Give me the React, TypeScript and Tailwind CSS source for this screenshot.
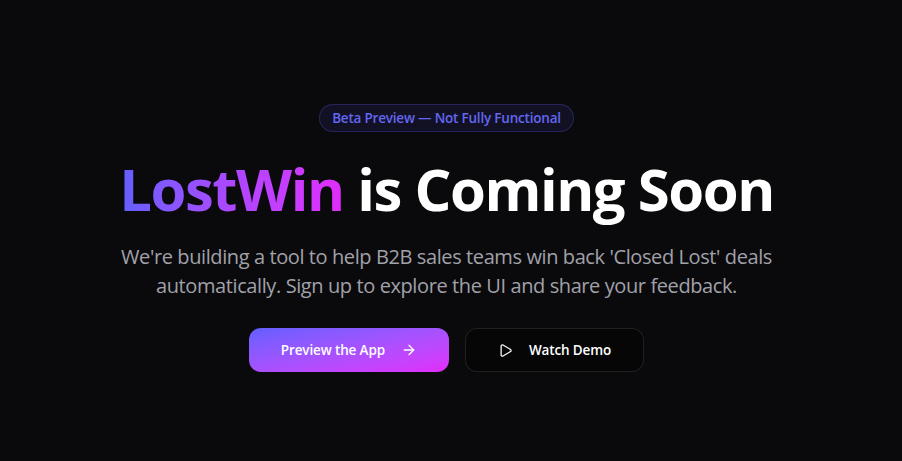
import React from 'react';
import { ArrowRight, Play } from 'lucide-react';

export default function App() {
  return (
    <div className="min-h-screen w-full bg-[#0a0a0c] font-['Open_Sans',sans-serif] text-white">
      <section className="flex flex-col items-center pl-6 pr-[33px] pt-[104px] text-center">
        <span className="rounded-full border border-indigo-500/25 bg-indigo-500/10 px-3 py-[3px] text-[13.5px] font-semibold leading-5 tracking-[-0.015em] text-[#6366f1]">
          Beta Preview — Not Fully Functional
        </span>

        <h1 className="mt-[21px] text-[58px] font-bold leading-[72px] tracking-[-0.025em]">
          <span className="bg-gradient-to-r from-indigo-500 via-purple-500 to-fuchsia-500 bg-clip-text text-transparent">
            LostWin
          </span>{' '}
          is Coming Soon
        </h1>

        <p className="mt-[17px] text-xl leading-[29px] tracking-[-0.02em] text-[#a1a1aa]">
          We're building a tool to help B2B sales teams win back 'Closed Lost' deals
          <br />
          automatically. Sign up to explore the UI and share your feedback.
        </p>

        <div className="mt-[28px] flex items-center gap-4">
          <button
            type="button"
            className="flex h-11 items-center gap-4 rounded-xl bg-gradient-to-br from-indigo-500 to-fuchsia-500 px-8 text-[13.5px] font-semibold tracking-[-0.01em] text-white"
          >
            Preview the App
            <ArrowRight size={16} />
          </button>
          <button
            type="button"
            className="flex h-11 items-center gap-4 rounded-xl border border-white/10 bg-black/40 px-8 text-[13.5px] font-semibold tracking-[-0.01em] text-white"
          >
            <Play size={15} />
            Watch Demo
          </button>
        </div>
      </section>
    </div>
  );
}
